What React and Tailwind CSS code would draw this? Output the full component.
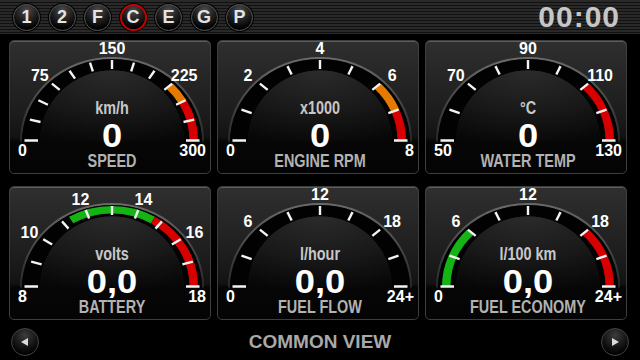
import clsx from 'clsx'

const ORANGE = '#e47a00'
const RED = '#d60000'
const GREEN = '#14b414'

const CX = 102
const CY = 99.5

const GAUGES = [
  { unit: 'km/h', value: '0', label: 'SPEED', min: '0', max: '300', ticks: 13,
    marks: [[45, '75'], [90, '150'], [135, '225']], bands: [[135, 150, ORANGE], [150, 180, RED]] },
  { unit: 'x1000', value: '0', label: 'ENGINE RPM', min: '0', max: '8', ticks: 9,
    marks: [[45, '2'], [90, '4'], [135, '6']], bands: [[135, 157.5, ORANGE], [157.5, 180, RED]] },
  { unit: '°C', value: '0', label: 'WATER TEMP', min: '50', max: '130', ticks: 9,
    marks: [[45, '70'], [90, '90'], [135, '110']], bands: [[135, 180, RED]] },
  { unit: 'volts', value: '0,0', label: 'BATTERY', min: '8', max: '18', ticks: 11,
    marks: [[36, '10'], [72, '12'], [108, '14'], [144, '16']], bands: [[60, 120, GREEN], [120, 180, RED]] },
  { unit: 'l/hour', value: '0,0', label: 'FUEL FLOW', min: '0', max: '24+', ticks: 9,
    marks: [[45, '6'], [90, '12'], [135, '18']], bands: [] },
  { unit: 'l/100 km', value: '0,0', label: 'FUEL ECONOMY', min: '0', max: '24+', ticks: 9,
    marks: [[45, '6'], [90, '12'], [135, '18']], bands: [[0, 45, GREEN], [135, 180, RED]] },
]

const MODES = ['1', '2', 'F', 'C', 'E', 'G', 'P']

function pt(a, rx, ry) {
  const r = (a * Math.PI) / 180
  return [CX - rx * Math.cos(r), CY - ry * Math.sin(r)]
}

function ring(rxo, ryo, rxi, ryi) {
  const b = CY + 1
  return `M${CX - rxo} ${b} A${rxo} ${ryo} 0 0 1 ${CX + rxo} ${b} L${CX + rxi} ${b} A${rxi} ${ryi} 0 0 0 ${CX - rxi} ${b} Z`
}

function segment(a1, a2) {
  const [x1, y1] = pt(a1, 86, 80.5)
  const [x2, y2] = pt(a2, 86, 80.5)
  const [x3, y3] = pt(a2, 77.5, 73)
  const [x4, y4] = pt(a1, 77.5, 73)
  return `M${x1} ${y1} A86 80.5 0 0 1 ${x2} ${y2} L${x3} ${y3} A77.5 73 0 0 0 ${x4} ${y4} Z`
}

// narrow/wide text without a condensed font: scale the glyphs horizontally
function Txt({ y, size, sx, fill, children }) {
  return (
    <text transform={`translate(${CX} ${y}) scale(${sx} 1)`} textAnchor="middle" fontSize={size} fill={fill} className="font-bold">
      {children}
    </text>
  )
}

function Gauge({ g, id }) {
  return (
    <svg width="202" height="134" viewBox="0 0 202 134" className="block">
      <defs>
        <radialGradient id={`dome${id}`} cx="50%" cy="0%" r="105%">
          <stop offset="0" stopColor="#2b2b2b" />
          <stop offset="0.55" stopColor="#191919" />
          <stop offset="1" stopColor="#070707" />
        </radialGradient>
        <linearGradient id={`rim${id}`} x1="0" y1="0" x2="0" y2="1">
          <stop offset="0" stopColor="#6a6a6a" />
          <stop offset="1" stopColor="#262626" />
        </linearGradient>
      </defs>
      <path d={`M${CX - 91} ${CY + 1} A91 83.5 0 0 1 ${CX + 91} ${CY + 1}`} fill="none" stroke={`url(#rim${id})`} strokeWidth="2.2" />
      <path d={ring(90, 82.5, 72, 71)} fill="#020202" />
      <path d={`M${CX - 72} ${CY + 1} A72 71 0 0 1 ${CX + 72} ${CY + 1} Z`} fill={`url(#dome${id})`} />
      {g.bands.map(([a1, a2, c]) => (
        <path key={a1} d={segment(a1, a2)} fill={c} />
      ))}
      {Array.from({ length: g.ticks }, (_, i) => {
        const a = (180 * i) / (g.ticks - 1)
        const end = i === 0 || i === g.ticks - 1
        const [x1, y1] = pt(a, 74, 71.5)
        const [x2, y2] = end ? pt(a, 87.5, 80.5) : pt(a, 85, 80.5)
        return <line key={i} x1={x1} y1={y1} x2={x2} y2={y2} stroke="#f4f4f4" strokeWidth="2.4" />
      })}
      <g className="font-bold" fill="#ffffff" fontSize="16">
        {g.marks.map(([a, t]) => {
          const [x, y] = pt(a, 102, 92)
          return <text key={t} x={x} y={y + 5.8} textAnchor="middle">{t}</text>
        })}
        <text x="8" y="115">{g.min}</text>
        <text x="196" y="115" textAnchor="end">{g.max}</text>
      </g>
      <Txt y={73} size={18} sx={0.8} fill="#c8c8c8">{g.unit}</Txt>
      <Txt y={105.5} size={33} sx={1.1} fill="#ffffff">{g.value}</Txt>
      <Txt y={126} size={19} sx={0.76} fill="#b2b2b2">{g.label}</Txt>
    </svg>
  )
}

function RoundButton({ children, active }) {
  return (
    <div
      className={clsx(
        'flex h-[27px] w-[27px] items-center justify-center rounded-full text-[18px] font-bold leading-none text-[#e4e4e4]',
        'bg-[radial-gradient(circle_at_50%_22%,#4c4c4c_0%,#1e1e1e_45%,#000000_78%)] shadow-[0_0_0_1px_#000]',
        active ? 'border-2 border-[#c40000]' : 'border border-[#505050]'
      )}
    >
      {children}
    </div>
  )
}

function ArrowButton({ dir }) {
  return (
    <div className="flex h-[28px] w-[28px] items-center justify-center rounded-full border border-[#444] bg-[radial-gradient(circle_at_50%_25%,#3c3c3c_0%,#141414_50%,#000_80%)]">
      <svg width="10" height="10" viewBox="0 0 10 10">
        {dir === 'left' ? <path d="M1 5 L8 1 L8 9 Z" fill="#dcdcdc" /> : <path d="M9 5 L2 1 L2 9 Z" fill="#dcdcdc" />}
      </svg>
    </div>
  )
}

export default function App() {
  return (
    <div className="flex h-[360px] w-[640px] flex-col overflow-hidden bg-black font-['Liberation_Sans',Arial,sans-serif]">
      <div className="flex h-[34px] items-center justify-between bg-[repeating-linear-gradient(to_bottom,#292929_0px,#292929_2px,#111111_2px,#111111_3px)] pl-[13px] pr-[20px]">
        <div className="flex gap-[8.5px]">
          {MODES.map((m) => (
            <RoundButton key={m} active={m === 'C'}>{m}</RoundButton>
          ))}
        </div>
        <div className="text-[30px] font-bold leading-none tracking-[1px] text-[#c6c6c6]">00:00</div>
      </div>

      <div className="grid grid-cols-[202px_202px_202px] grid-rows-[134px_134px] gap-x-[6px] gap-y-[12px] pl-[9px] pt-[6px]">
        {GAUGES.map((g, i) => (
          <div
            key={g.label}
            className="overflow-hidden rounded-[5px] border border-[#3e3e3e] bg-[linear-gradient(to_bottom,#2f2f2f_0%,#1c1c1c_55%,#121212_73%,#060606_76%,#040404_100%)] shadow-[inset_0_1px_0_#5c5c5c]"
          >
            <Gauge g={g} id={i} />
          </div>
        ))}
      </div>

      <div className="flex flex-1 items-center justify-between px-[11px] pt-[3px]">
        <ArrowButton dir="left" />
        <div className="text-[19px] font-bold leading-none text-[#a9a9a9]">COMMON VIEW</div>
        <ArrowButton dir="right" />
      </div>
    </div>
  )
}
